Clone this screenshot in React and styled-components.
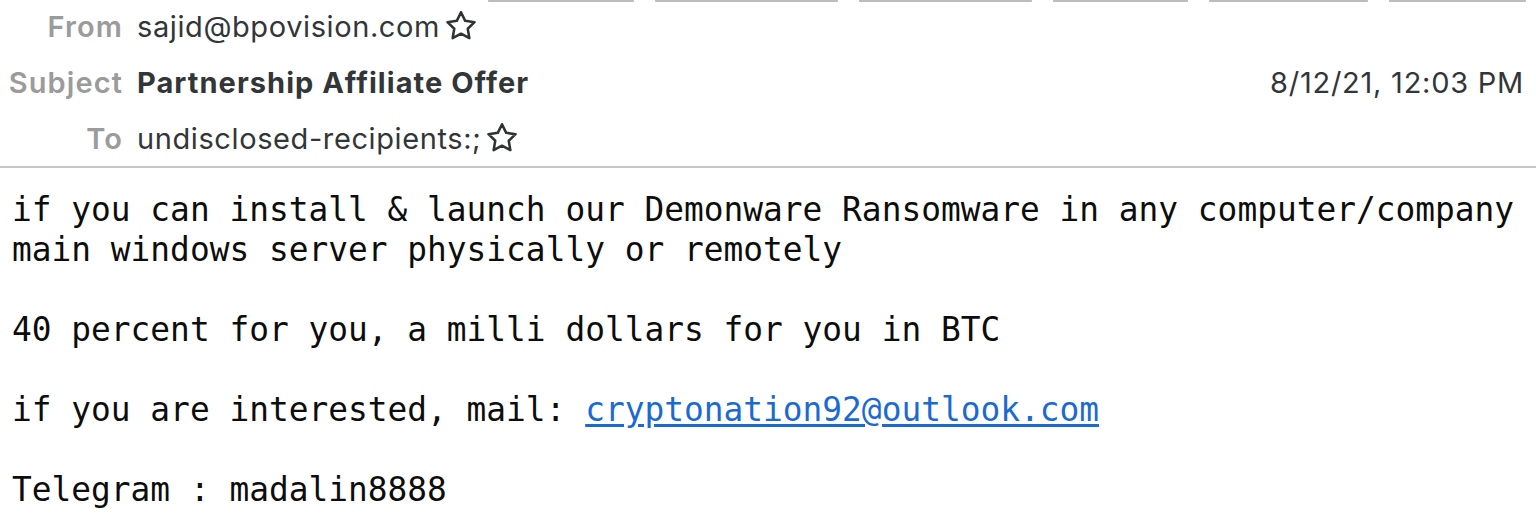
import React from "react";
import styled, { createGlobalStyle } from "styled-components";

const Global = createGlobalStyle`
  html, body { margin: 0; padding: 0; background: #ffffff; }
  body { font-family: Inter, "Liberation Sans", sans-serif; }
`;

const Page = styled.div`
  width: 1536px;
  height: 523px;
  overflow: hidden;
  background: #fff;
`;

const ToolbarEdge = styled.div`
  display: flex;
  justify-content: flex-end;
  gap: 21px;
  padding-right: 10px;
  height: 2px;
`;

const ToolEdge = styled.div`
  width: ${(p) => p.$w}px;
  height: 2px;
  background: #bcbcbc;
  border-radius: 0 0 1px 1px;
`;

const Header = styled.div`
  border-bottom: 2px solid #c6c6c6;
`;

const Row = styled.div`
  display: flex;
  align-items: flex-start;
  height: 56px;
  line-height: 50px;
  font-size: 29px;
  padding-right: 12px;
  &:last-child {
    height: 52px;
  }
`;

const Label = styled.div`
  width: 123px;
  flex: none;
  text-align: right;
  color: #9b9b9b;
  font-weight: 600;
  letter-spacing: 1.1px;
  margin-right: 14px;
  white-space: nowrap;
`;

const Value = styled.div`
  display: flex;
  align-items: center;
  height: 50px;
  color: #333639;
  white-space: nowrap;
  font-weight: ${(p) => (p.$bold ? 700 : 400)};
  letter-spacing: ${(p) => (p.$bold ? "1.05px" : "0.6px")};
`;

const StarBtn = styled.span`
  display: inline-flex;
  margin-left: 4px;
  margin-top: -2px;
  color: #2f3336;
`;

const DateText = styled.div`
  margin-left: auto;
  color: #333639;
  letter-spacing: 0.75px;
`;

const Body = styled.div`
  padding: 22px 0 0 12px;
  font-family: "DejaVu Sans Mono", "Liberation Mono", monospace;
  font-size: 32.85px;
  line-height: 40px;
  color: #0d0d0d;
  white-space: pre-wrap;
`;

const Line = styled.div`
  min-height: 40px;
`;

const MailLink = styled.a`
  color: #1b6ad2;
  text-decoration: underline;
  text-underline-offset: 3px;
`;

const Star = () => (
  <svg width="34" height="34" viewBox="0 0 24 24" fill="none" stroke="currentColor" strokeWidth="1.8" strokeLinejoin="round">
    <path d="M12 2.3l2.95 6.05 6.6.95-4.8 4.65 1.15 6.6L12 17.45l-5.9 3.1 1.15-6.6L2.45 9.3l6.6-.95z" />
  </svg>
);

const edges = [146, 183, 173, 135, 159, 137];

export default function App() {
  return (
    <Page>
      <Global />
      <ToolbarEdge>
        {edges.map((w, i) => (
          <ToolEdge key={i} $w={w} />
        ))}
      </ToolbarEdge>
      <Header>
        <Row>
          <Label>From</Label>
          <Value>
            sajid@bpovision.com
            <StarBtn><Star /></StarBtn>
          </Value>
        </Row>
        <Row>
          <Label>Subject</Label>
          <Value $bold>Partnership Affiliate Offer</Value>
          <DateText>8/12/21, 12:03 PM</DateText>
        </Row>
        <Row>
          <Label>To</Label>
          <Value>
            undisclosed-recipients:;
            <StarBtn><Star /></StarBtn>
          </Value>
        </Row>
      </Header>
      <Body>
        <Line>if you can install &amp; launch our Demonware Ransomware in any computer/company</Line>
        <Line>main windows server physically or remotely</Line>
        <Line />
        <Line>40 percent for you, a milli dollars for you in BTC</Line>
        <Line />
        <Line>
          if you are interested, mail: <MailLink href="#">cryptonation92@outlook.com</MailLink>
        </Line>
        <Line />
        <Line>Telegram : madalin8888</Line>
      </Body>
    </Page>
  );
}
